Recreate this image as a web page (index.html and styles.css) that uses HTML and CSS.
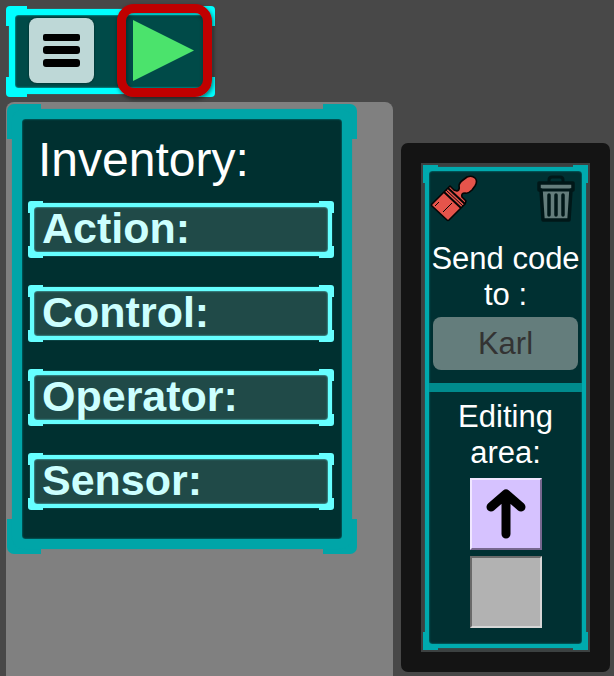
FILE: index.html
```html
<!DOCTYPE html>
<html lang="en">
<head>
<meta charset="utf-8">
<meta name="viewport" content="width=device-width, initial-scale=1">
<title>Code editor</title>
<link rel="stylesheet" href="styles.css">
</head>
<body>
<div class="app">
  <main class="workspace">
    <div class="frame frame-toolbar">
      <div class="frame-body toolbar">
        <button class="menu-button" type="button" aria-label="Menu">
          <svg width="37" height="33" viewBox="0 0 37 33" aria-hidden="true">
            <rect width="37" height="7" rx="2"/>
            <rect y="12" width="37" height="8" rx="3"/>
            <rect y="25" width="37" height="8" rx="3"/>
          </svg>
        </button>
        <button class="play-button" type="button" aria-label="Run">
          <svg width="61" height="61" viewBox="0 0 61 61" aria-hidden="true">
            <path d="M0 0L61 30.500L0 61Z" fill="#4be36c"/>
          </svg>
        </button>
      </div>
    </div>
    <div class="drawer">
      <section class="frame frame-inventory">
        <div class="frame-body inventory">
          <h1>Inventory:</h1>
          <div class="categories">
            <button class="frame frame-category" type="button"><span class="frame-body category">Action:</span></button>
            <button class="frame frame-category" type="button"><span class="frame-body category">Control:</span></button>
            <button class="frame frame-category" type="button"><span class="frame-body category">Operator:</span></button>
            <button class="frame frame-category" type="button"><span class="frame-body category">Sensor:</span></button>
          </div>
        </div>
      </section>
    </div>
  </main>
  <aside class="side">
    <div class="frame frame-side">
      <div class="frame-body editor">
        <div class="tools">
          <button type="button" aria-label="Clean">
            <svg width="48" height="48" viewBox="0 0 48 48" aria-hidden="true">
              <g fill="#e5544b" stroke="#050505" stroke-width="1.600" stroke-linejoin="round">
                <path d="M2 29L20 11L24 15L27 16Q30 15 29 11Q29 8 33 5L37 2Q42 0 45 3Q48 6 45 11L42 15Q38 19 35 18Q31 18 32 22L36 26L35 29L19 45Q18 46 17 45L2 31Q1 30 2 29Z"/>
                <path d="M14 17L31 33M18 13L35 29" fill="none" stroke-width="2"/>
                <path d="M16 15L33 31" fill="none" stroke-width="1"/>
                <path d="M5 31L9 27M13 37L22 28" fill="none" stroke-width="1"/>
              </g>
            </svg>
          </button>
          <button type="button" aria-label="Delete">
            <svg width="40" height="48" viewBox="0 0 40 48" aria-hidden="true">
              <path d="M13 8V5Q13 2 16 2H24Q27 2 27 5V8" fill="none" stroke="#001718" stroke-width="3"/>
              <path d="M3 8H37V15H35L33 45H7L5 15H3Z" fill="#647d7c" stroke="#001718" stroke-width="3.500" stroke-linejoin="round"/>
              <path d="M3 15H37" stroke="#001718" stroke-width="3"/>
              <path d="M13 20V40M20 20V40M27 20V40" stroke="#001718" stroke-width="3.500" stroke-linecap="round"/>
            </svg>
          </button>
        </div>
        <p>Send code to :</p>
        <button class="target" type="button">Karl</button>
        <hr>
        <p>Editing area:</p>
        <div class="slots">
          <button class="slot slot-filled" type="button" aria-label="Move up">
            <svg width="40" height="52" viewBox="0 0 40 52" aria-hidden="true">
              <path d="M20 46V6M5 19L20 6L35 19" fill="none" stroke="#000" stroke-width="9" stroke-linecap="round" stroke-linejoin="round"/>
            </svg>
          </button>
          <button class="slot slot-empty" type="button" aria-label="Empty slot"></button>
        </div>
      </div>
    </div>
  </aside>
</div>
</body>
</html>
```
FILE: styles.css
```css
* {
  box-sizing: border-box;
}

body {
  margin: 0;
  background: #484848;
  color: #fff;
  font-family: "Liberation Sans", Arial, sans-serif;
}

button {
  margin: 0;
  padding: 0;
  border: 0;
  background: none;
  color: inherit;
  font: inherit;
  cursor: pointer;
}

svg {
  display: block;
}

.app {
  display: flex;
  align-items: flex-start;
  gap: 8px;
  min-height: 100vh;
  padding: 0 4px 0 6px;
}

.workspace {
  flex: 1;
  display: flex;
  flex-direction: column;
  gap: 5px;
  min-height: 100vh;
  padding-top: 6px;
}

/* Bordered box with thicker corner brackets */
.frame {
  display: block;
  padding: var(--outset);
  border-radius: 4px;
  background:
    linear-gradient(var(--line) 0 0) left top,
    linear-gradient(var(--line) 0 0) right top,
    linear-gradient(var(--line) 0 0) left bottom,
    linear-gradient(var(--line) 0 0) right bottom;
  background-size: var(--corner-w) var(--corner-h);
  background-repeat: no-repeat;
}

.frame-body {
  display: block;
  border: var(--band) solid var(--line);
  border-radius: calc(var(--band) + 3px);
  background: var(--fill);
  background-clip: padding-box;
  box-shadow: 0 0 1px var(--line), inset 0 0 2px var(--line);
}

.frame-toolbar {
  --line: #00ffff;
  --fill: #004a48;
  --outset: 3px;
  --band: 6px;
  --corner-w: 21px;
  --corner-h: 20px;
  align-self: flex-start;
}

.toolbar {
  display: flex;
  align-items: center;
  gap: 39px;
  height: 85px;
  padding: 0 12px 2px 14px;
}

.menu-button {
  display: grid;
  place-items: center;
  width: 65px;
  height: 65px;
  border-radius: 8px;
  background: #bed8d7;
  box-shadow: 0 0 2px #001c1c;
}

.play-button {
  position: relative;
}

.play-button::after {
  content: "";
  position: absolute;
  inset: -16px -18px -16px -16px;
  border: 9px solid #c00000;
  border-radius: 17px;
  box-shadow: 1px 2px 4px #0008, inset 1px 2px 4px #0006;
}

.drawer {
  flex: 1;
  padding: 2px 36px 2px 1px;
  border-radius: 8px 8px 0 0;
  background: #808080;
}

.frame-inventory {
  --line: #00a5a8;
  --fill: #003030;
  --outset: 5px;
  --band: 10px;
  --corner-w: 34px;
  --corner-h: 35px;
  border-radius: 7px;
}

.inventory {
  padding: 14px 8px 29px 6px;
}

h1 {
  margin: 0 0 14px 10px;
  font-size: 48px;
  font-weight: 400;
  line-height: 54px;
}

.categories {
  display: grid;
  gap: 27px;
}

.frame-category {
  --line: #66ffff;
  --fill: #204a48;
  --outset: 2px;
  --band: 4px;
  --corner-w: 15px;
  --corner-h: 12px;
  border-radius: 3px;
}

.category {
  padding: 0 8px 2px;
  color: #ccffff;
  font-size: 43px;
  font-weight: 700;
  line-height: 43px;
  text-align: left;
}

.side {
  width: 209px;
  margin-top: 143px;
  padding: 20px;
  border-radius: 7px;
  background: #141414;
}

.frame-side {
  --line: #00aaae;
  --fill: #003032;
  --outset: 2px;
  --band: 4px;
  --corner-w: 15px;
  --corner-h: 18px;
  border: 2px solid #3c4141;
  border-radius: 0;
  background-color: #3c4141;
}

.editor {
  display: flex;
  flex-direction: column;
  padding: 4px 0 16px;
}

.tools {
  display: flex;
  justify-content: space-between;
  padding: 0 6px 0 1px;
}

p {
  margin: 0;
  font-size: 31px;
  line-height: 36px;
  text-align: center;
}

.tools + p {
  margin-top: 18px;
}

.target {
  height: 53px;
  margin: 4px 4px 13px;
  border-radius: 8px;
  background: #647d7c;
  color: #333;
  font-size: 31px;
}

hr {
  width: 100%;
  height: 9px;
  margin: 0 0 7px;
  border: 0;
  background: #008b8d;
}

.slots {
  display: grid;
  justify-content: center;
  gap: 6px;
  margin-top: 7px;
}

.slot {
  display: grid;
  place-items: center;
  width: 72px;
  height: 72px;
  border: 2px solid;
}

.slot-filled {
  border-color: #f0e6ff #77678f #77678f #f0e6ff;
  background: #d6c2ff;
}

.slot-empty {
  border-color: #6a6a6a #d6d6d6 #d6d6d6 #6a6a6a;
  background: #b2b2b2;
}
```
